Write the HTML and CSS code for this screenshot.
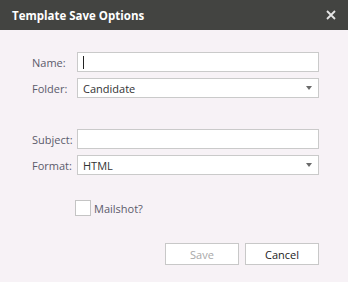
FILE: index.html
```html
<!DOCTYPE html>
<html>
<head>
<meta charset="utf-8">
<link rel="stylesheet" href="styles.css">
</head>
<body>
<div class="dialog">
  <div class="titlebar">
    <span class="title">Template Save Options</span>
    <svg class="close" width="10" height="10" viewBox="0 0 10 10"><path d="M1 1L9 9M9 1L1 9" stroke="#e6e6e6" stroke-width="1.8" fill="none"/></svg>
  </div>
  <div class="content">
    <div class="group">
      <div class="row">
        <span class="label">Name:</span>
        <div class="field"><span class="caret"></span></div>
      </div>
      <div class="row">
        <span class="label">Folder:</span>
        <div class="field select"><span class="value">Candidate</span><span class="arrow"></span></div>
      </div>
    </div>
    <div class="group second">
      <div class="row">
        <span class="label">Subject:</span>
        <div class="field"></div>
      </div>
      <div class="row">
        <span class="label">Format:</span>
        <div class="field select"><span class="value">HTML</span><span class="arrow"></span></div>
      </div>
    </div>
    <div class="check-row">
      <span class="checkbox"></span>
      <span class="check-label">Mailshot?</span>
    </div>
    <div class="buttons">
      <div class="btn disabled">Save</div>
      <div class="btn">Cancel</div>
    </div>
  </div>
</div>
</body>
</html>
```
FILE: styles.css
```css
html, body {
  margin: 0;
  padding: 0;
  background: #f7f2f6;
  font-family: "Open Sans", "Noto Sans", sans-serif;
}
.dialog {
  width: 348px;
  height: 282px;
  background: #f7f2f6;
}
.titlebar {
  height: 30px;
  background: #434441;
  display: flex;
  align-items: center;
  justify-content: space-between;
  padding: 0 12px 0 12px;
  box-sizing: border-box;
}
.title {
  color: #ffffff;
  font-weight: bold;
  font-size: 11.5px;
}
.close {
  display: block;
}
.content {
  padding: 22px 29px 0 32px;
}
.group {
  display: flex;
  flex-direction: column;
  gap: 6px;
}
.group.second {
  margin-top: 31px;
}
.row {
  display: flex;
  align-items: center;
  height: 20px;
}
.label {
  width: 45px;
  font-size: 11px;
  color: #5b5b6b;
}
.field {
  flex: 1;
  height: 20px;
  box-sizing: border-box;
  background: #ffffff;
  border: 1px solid #cacaca;
  display: flex;
  align-items: center;
  padding: 0 5px;
}
.caret {
  width: 1px;
  height: 13px;
  background: #222;
}
.value {
  font-size: 11px;
  color: #333333;
  flex: 1;
}
.arrow {
  width: 0;
  height: 0;
  border-left: 3.5px solid transparent;
  border-right: 3.5px solid transparent;
  border-top: 4px solid #6a6a6a;
  margin-right: 1px;
}
.check-row {
  display: flex;
  align-items: center;
  margin-top: 25px;
  margin-left: 43px;
  gap: 3px;
}
.checkbox {
  width: 16px;
  height: 16px;
  box-sizing: border-box;
  border: 1px solid #c4c4c4;
  background: #ffffff;
}
.check-label {
  font-size: 11px;
  color: #5b5b6b;
}
.buttons {
  display: flex;
  justify-content: flex-end;
  gap: 6px;
  margin-top: 27px;
}
.btn {
  width: 74px;
  height: 22px;
  box-sizing: border-box;
  border: 1px solid #c8c8c8;
  background: #ffffff;
  font-size: 11px;
  color: #222;
  display: flex;
  align-items: center;
  justify-content: center;
}
.btn.disabled {
  color: #a8a8a8;
}
```
